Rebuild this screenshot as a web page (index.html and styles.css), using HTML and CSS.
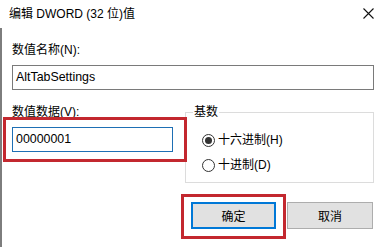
FILE: index.html
```html
<!DOCTYPE html>
<html lang="zh-CN">
<head>
    <meta charset="UTF-8">
    <title>编辑 DWORD (32 位)值</title>
    <link rel="stylesheet" href="styles.css">
</head>
<body>
    <div class="dialog">
        <div class="titlebar">
            <span class="title">编辑 DWORD (32 位)值</span>
            <svg class="close" width="11" height="11" viewBox="0 0 11 11">
                <path d="M0.5 0.5 L10.5 10.5 M10.5 0.5 L0.5 10.5" stroke="#111" stroke-width="1.1" fill="none"/>
            </svg>
        </div>

        <div class="content">
            <div class="field-label">数值名称(N):</div>
            <div class="textbox">AltTabSettings</div>

            <div class="row">
                <div class="data-col">
                    <div class="field-label">数值数据(V):</div>
                    <div class="textbox focused">00000001</div>
                </div>
                <fieldset class="base">
                    <legend>基数</legend>
                    <div class="radio checked"><span class="dot"></span>十六进制(H)</div>
                    <div class="radio second"><span class="dot"></span>十进制(D)</div>
                </fieldset>
            </div>

            <div class="buttons">
                <button class="btn default">确定</button>
                <button class="btn">取消</button>
            </div>
        </div>

        <!-- 红色标注框 -->
        <div class="mark mark-data"></div>
        <div class="mark mark-ok"></div>
    </div>
</body>
</html>
```

FILE: styles.css
```css
* {
    box-sizing: border-box;
}
body {
    margin: 0;
    background: #fff;
    font-family: "Liberation Sans", "Noto Sans CJK SC", sans-serif;
    font-size: 12px;
    color: #000;
}
.dialog {
    position: relative;
    width: 384px;
    height: 247px;
    background: #fff;
    overflow: hidden;
}
.titlebar {
    height: 28px;
    display: flex;
    align-items: center;
    justify-content: space-between;
    padding: 0 10px 0 9px;
}
.title {
    line-height: 16px;
}
.close {
    display: block;
    margin-top: -1px;
}
.content {
    height: 219px;
    border-left: 2px solid #7d7d7d; /* 左侧灰边 */
    padding: 14px 10px 0 10px;
}
.field-label {
    height: 16px;
    line-height: 16px;
}
.textbox {
    margin-top: 7px;
    height: 25px;
    line-height: 23px;
    border: 1px solid #7a7a7a;
    padding-left: 3px;
    font-size: 12.4px;
}
.textbox.focused {
    border-color: #1e6fb4;
}
.row {
    margin-top: 14px;
    display: grid;
    grid-template-columns: 161px 189px;
    column-gap: 12px;
}
.base {
    margin: 0;
    height: 79px;
    border: 1px solid #dcdcdc;
    padding: 12px 0 0 16px;
    min-width: 0;
}
.base legend {
    padding: 0 1px;
    margin-left: -9px;
    line-height: 16px;
    height: 16px;
}
.radio {
    display: flex;
    align-items: center;
    height: 16px;
    line-height: 16px;
}
.radio.second {
    margin-top: 9px;
}
.dot {
    width: 13px;
    height: 13px;
    border: 1px solid #333;
    border-radius: 50%;
    margin-right: 3px;
    display: flex;
    align-items: center;
    justify-content: center;
}
.radio.checked .dot::after {
    content: "";
    width: 7px;
    height: 7px;
    border-radius: 50%;
    background: #333;
}
.buttons {
    margin-top: 19px;
    display: flex;
    justify-content: flex-end;
    gap: 11px;
    padding-right: 1px;
}
.btn {
    font-family: inherit;
    font-size: 12px;
    width: 86px;
    height: 27px;
    background: #e1e1e1;
    border: 1px solid #adadad;
    padding: 0;
    color: #000;
}
.btn.default {
    width: 85px;
    border: 2px solid #0078d7;
}
.mark {
    position: absolute;
    border: 3px solid #c3282f;
}
.mark-data {
    left: 3px;
    top: 117px;
    width: 184px;
    height: 45px;
}
.mark-ok {
    left: 181px;
    top: 194px;
    width: 105px;
    height: 45px;
}
```
